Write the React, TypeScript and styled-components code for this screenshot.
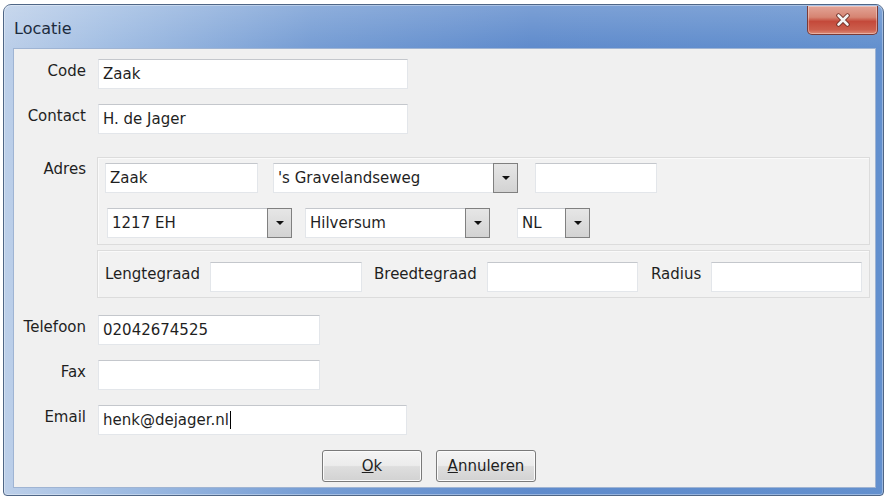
import React from 'react';
import styled, { createGlobalStyle } from 'styled-components';

const GlobalStyle = createGlobalStyle`
  html, body {
    margin: 0;
    padding: 0;
    background: #ffffff;
  }
  body {
    font-family: Tahoma, "DejaVu Sans", "Liberation Sans", sans-serif;
    font-size: 15px;
    color: #1f1f1f;
  }
`;

const Page = styled.div`
  padding: 4px 5px 3px 3px;
`;

const Window = styled.div`
  height: 492px;
  box-sizing: border-box;
  border: 1px solid #4f6686;
  border-radius: 8px 8px 4px 4px;
  background: linear-gradient(
    to right,
    #bccfe9 0%,
    #a2bee3 12%,
    #769dd4 35%,
    #5f8bcc 60%,
    #6390ce 100%
  );
  display: flex;
  flex-direction: column;
  box-shadow: inset 0 0 0 1px rgba(255, 255, 255, 0.35);
`;

const TitleBar = styled.div`
  height: 43px;
  display: flex;
  align-items: flex-start;
  justify-content: space-between;
  padding: 0 5px 0 10px;
  background: linear-gradient(to bottom, rgba(255, 255, 255, 0.18), rgba(255, 255, 255, 0));
`;

const Title = styled.div`
  margin-top: 14px;
  font-size: 16px;
  color: #1d2b3d;
`;

const CloseButton = styled.div`
  margin-top: 1px;
  width: 71px;
  height: 29px;
  box-sizing: border-box;
  border: 1px solid #7a3a36;
  border-top: none;
  border-radius: 0 0 5px 5px;
  background: linear-gradient(
    to bottom,
    #e3a598 0%,
    #d68472 40%,
    #c4493a 55%,
    #cc5f4d 85%,
    #de8c78 100%
  );
  display: flex;
  align-items: center;
  justify-content: center;
  box-shadow: inset 0 0 0 1px rgba(255, 255, 255, 0.35);
`;

const Content = styled.div`
  flex: 1;
  margin: 0 7px 7px 9px;
  border: 1px solid #9fb4d3;
  background: #f0f0f0;
  display: flex;
  flex-direction: column;
  padding-top: 10px;
`;

const Row = styled.div<{ $gap?: number }>`
  display: flex;
  align-items: flex-start;
  margin-top: ${p => p.$gap ?? 0}px;
`;

const Label = styled.div`
  width: 72px;
  margin-right: 12px;
  text-align: right;
  padding-top: 3px;
  line-height: 18px;
  font-size: 15px;
  white-space: nowrap;
`;

const TextBox = styled.div<{ $w: number }>`
  width: ${p => p.$w}px;
  height: 30px;
  box-sizing: border-box;
  background: #ffffff;
  border: 1px solid #e3e6ea;
  border-top-color: #c4c7cc;
  padding: 0 4px;
  display: flex;
  align-items: center;
  white-space: nowrap;
  font-size: 15px;
  flex: none;
`;

const Caret = styled.span`
  display: inline-block;
  width: 1px;
  height: 18px;
  background: #000;
  margin-left: 1px;
`;

const GroupBox = styled.div<{ $h: number; $pad: string }>`
  width: 773px;
  height: ${p => p.$h}px;
  box-sizing: border-box;
  margin-left: -1px;
  border: 1px solid #dcdcdc;
  box-shadow: inset 1px 1px 0 #fafafa;
  background: #f2f2f2;
  padding: ${p => p.$pad};
  display: flex;
  flex-direction: column;
`;

const GroupLine = styled.div<{ $gap?: number; $indent?: number; $top?: number }>`
  display: flex;
  align-items: center;
  gap: ${p => p.$gap ?? 15}px;
  padding-left: ${p => p.$indent ?? 0}px;
  margin-top: ${p => p.$top ?? 0}px;
`;

const Combo = styled.div<{ $w: number }>`
  width: ${p => p.$w}px;
  height: 30px;
  box-sizing: border-box;
  background: #ffffff;
  border: 1px solid #e3e6ea;
  border-top-color: #c4c7cc;
  display: flex;
  align-items: stretch;
  flex: none;
`;

const ComboText = styled.div`
  flex: 1;
  padding: 0 4px;
  display: flex;
  align-items: center;
  font-size: 15px;
  white-space: nowrap;
  overflow: hidden;
`;

const DropButton = styled.div`
  width: 25px;
  margin: -1px -1px -1px 0;
  box-sizing: border-box;
  border: 1px solid #808080;
  background: linear-gradient(to bottom, #e6e6e6, #d3d3d3);
  display: flex;
  align-items: center;
  justify-content: center;
`;

const Arrow = styled.div`
  width: 0;
  height: 0;
  border-left: 4px solid transparent;
  border-right: 4px solid transparent;
  border-top: 4px solid #111;
`;

const CoordLabel = styled.div<{ $w: number }>`
  width: ${p => p.$w}px;
  flex: none;
  padding-bottom: 6px;
  font-size: 15px;
  white-space: nowrap;
`;

const ButtonBar = styled.div`
  display: flex;
  gap: 14px;
  padding-left: 308px;
  margin-top: 15px;
`;

const Button = styled.div`
  width: 100px;
  height: 32px;
  box-sizing: border-box;
  border: 1px solid #7a7a7a;
  border-radius: 3px;
  background: linear-gradient(to bottom, #f4f4f4 0%, #ececec 48%, #dedede 52%, #d2d2d2 100%);
  box-shadow: inset 0 0 0 1px #fbfbfb;
  display: flex;
  align-items: center;
  justify-content: center;
  font-size: 15px;

  u {
    text-decoration: underline;
  }
`;

const DropCombo = ({ w, text }: { w: number; text: string }) => (
  <Combo $w={w}>
    <ComboText>{text}</ComboText>
    <DropButton>
      <Arrow />
    </DropButton>
  </Combo>
);

export default function App() {
  return (
    <>
      <GlobalStyle />
      <Page>
        <Window>
          <TitleBar>
            <Title>Locatie</Title>
            <CloseButton>
              <svg width="16" height="14" viewBox="0 0 16 14">
                <path
                  d="M3.5 2.5 L12.5 11.5 M12.5 2.5 L3.5 11.5"
                  stroke="#6a2a22"
                  strokeWidth="4.4"
                  strokeLinecap="round"
                />
                <path
                  d="M3.5 2.5 L12.5 11.5 M12.5 2.5 L3.5 11.5"
                  stroke="#f4f4f4"
                  strokeWidth="2.6"
                  strokeLinecap="round"
                />
              </svg>
            </CloseButton>
          </TitleBar>
          <Content>
            <Row>
              <Label>Code</Label>
              <TextBox $w={310}>Zaak</TextBox>
            </Row>
            <Row $gap={15}>
              <Label>Contact</Label>
              <TextBox $w={310}>H. de Jager</TextBox>
            </Row>
            <Row $gap={23}>
              <Label>Adres</Label>
              <GroupBox $h={88} $pad="5px 0 0 7px">
                <GroupLine $gap={15}>
                  <TextBox $w={153}>Zaak</TextBox>
                  <DropCombo w={245} text="'s Gravelandseweg" />
                  <TextBox $w={122} style={{ marginLeft: 2 }} />
                </GroupLine>
                <GroupLine $gap={13} $indent={2} $top={15}>
                  <DropCombo w={185} text="1217 EH" />
                  <DropCombo w={185} text="Hilversum" />
                  <Combo $w={73} style={{ marginLeft: 14 }}>
                    <ComboText>NL</ComboText>
                    <DropButton>
                      <Arrow />
                    </DropButton>
                  </Combo>
                </GroupLine>
              </GroupBox>
            </Row>
            <Row $gap={5}>
              <Label />
              <GroupBox $h={48} $pad="11px 0 0 7px">
                <GroupLine $gap={0}>
                  <CoordLabel $w={105}>Lengtegraad</CoordLabel>
                  <TextBox $w={152} />
                  <CoordLabel $w={113} style={{ marginLeft: 12 }}>Breedtegraad</CoordLabel>
                  <TextBox $w={151} />
                  <CoordLabel $w={60} style={{ marginLeft: 13 }}>Radius</CoordLabel>
                  <TextBox $w={151} />
                </GroupLine>
              </GroupBox>
            </Row>
            <Row $gap={17}>
              <Label>Telefoon</Label>
              <TextBox $w={222}>02042674525</TextBox>
            </Row>
            <Row $gap={15}>
              <Label>Fax</Label>
              <TextBox $w={222} />
            </Row>
            <Row $gap={15}>
              <Label>Email</Label>
              <TextBox $w={309}>
                henk@dejager.nl
                <Caret />
              </TextBox>
            </Row>
            <ButtonBar>
              <Button>
                <span>
                  <u>O</u>k
                </span>
              </Button>
              <Button>
                <span>
                  <u>A</u>nnuleren
                </span>
              </Button>
            </ButtonBar>
          </Content>
        </Window>
      </Page>
    </>
  );
}
